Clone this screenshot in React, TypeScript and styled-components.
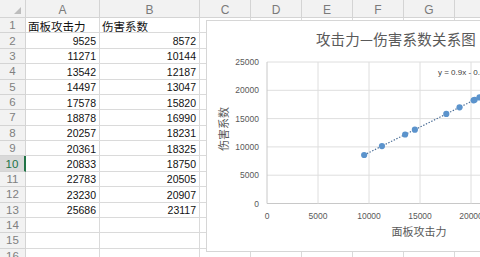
import React from "react";
import styled, { createGlobalStyle } from "styled-components";

const GlobalStyle = createGlobalStyle`
  html, body { margin: 0; padding: 0; background: #fff; overflow: hidden; }
  #root { width: 480px; height: 257px; overflow: hidden; }
`;

const columns = ["A", "B", "C", "D", "E", "F", "G"];
const data: [number, number][] = [
  [9525, 8572],
  [11271, 10144],
  [13542, 12187],
  [14497, 13047],
  [17578, 15820],
  [18878, 16990],
  [20257, 18231],
  [20361, 18325],
  [20833, 18750],
  [22783, 20505],
  [23230, 20907],
  [25686, 23117],
];

const Page = styled.div`
  position: relative;
  width: 480px;
  height: 257px;
  overflow: hidden;
`;

const Sheet = styled.div`
  display: grid;
  width: 540px;
  grid-template-columns: 26px 74px 100px repeat(5, 51px) 85px;
  grid-template-rows: 18px;
  grid-auto-rows: 15.385px;
  font-family: "Liberation Sans", "Noto Sans CJK SC", sans-serif;
`;

const Corner = styled.div`
  position: relative;
  background: #f2f2f2;
  border-right: 1px solid #d4d4d4;
  border-bottom: 1px solid #d4d4d4;
  box-sizing: border-box;
  &::after {
    content: "";
    position: absolute;
    right: 4px;
    bottom: 3px;
    width: 0;
    height: 0;
    border-left: 7px solid transparent;
    border-bottom: 7px solid #bdbdbd;
  }
`;

const ColHeader = styled.div`
  background: #f2f2f2;
  border-right: 1px solid #d4d4d4;
  border-bottom: 1px solid #d4d4d4;
  box-sizing: border-box;
  display: flex;
  align-items: center;
  justify-content: center;
  color: #7a7a7a;
  font-size: 12px;
  padding-top: 2px;
`;

const RowHeader = styled.div<{ $active?: boolean }>`
  background: ${(p) => (p.$active ? "#d9d9d9" : "#f2f2f2")};
  border-right: ${(p) => (p.$active ? "2px solid #217346" : "1px solid #d4d4d4")};
  border-bottom: 1px solid #d4d4d4;
  box-sizing: border-box;
  display: flex;
  align-items: center;
  justify-content: center;
  color: ${(p) => (p.$active ? "#217346" : "#808080")};
  font-size: 11.5px;
`;

const Cell = styled.div<{ $num?: boolean }>`
  border-right: 1px solid #dadada;
  border-bottom: 1px solid #dadada;
  box-sizing: border-box;
  display: flex;
  align-items: center;
  justify-content: ${(p) => (p.$num ? "flex-end" : "flex-start")};
  padding: ${(p) => (p.$num ? "1px 3px 0 0" : "1px 0 0 2px")};
  color: #111;
  font-size: ${(p) => (p.$num ? "10.5px" : "11.5px")};
  font-family: ${(p) =>
    p.$num ? `"Liberation Sans", sans-serif` : `"Noto Sans CJK SC", sans-serif`};
  white-space: nowrap;
  overflow: hidden;
`;

const Chart = styled.div`
  position: absolute;
  left: 206px;
  top: 20px;
  width: 380px;
  height: 232px;
  background: #fff;
  border: 1px solid #d6d6d6;
  box-sizing: border-box;
  display: flex;
  flex-direction: column;
`;

const ChartTitle = styled.div`
  height: 34px;
  flex: none;
  display: flex;
  align-items: center;
  justify-content: center;
  color: #595959;
  font-family: "Noto Sans CJK SC", sans-serif;
  font-size: 14.5px;
  letter-spacing: 0.2px;
`;

const Plot = styled.svg`
  display: block;
  flex: none;
  font-family: "Liberation Sans", "Noto Sans CJK SC", sans-serif;
`;

const X0 = 267;
const XS = 51 / 5000;
const Y0 = 203.5;
const YS = 28.3 / 5000;
const px = (v: number) => X0 + v * XS;
const py = (v: number) => Y0 - v * YS;

function ScatterPlot() {
  const yTicks = [0, 5000, 10000, 15000, 20000, 25000];
  const xTicks = [0, 5000, 10000, 15000, 20000];
  return (
    <Plot width={378} height={196} viewBox="0 0 378 196">
      <g transform="translate(-207 -55)">
        {yTicks.map((t) => (
          <line key={"h" + t} x1={X0} x2={600} y1={py(t)} y2={py(t)} stroke={t === 0 ? "#c8c8c8" : "#dedede"} strokeWidth={1} />
        ))}
        {xTicks.map((t) => (
          <line key={"v" + t} x1={px(t)} x2={px(t)} y1={py(25000)} y2={py(0)} stroke={t === 0 ? "#c8c8c8" : "#dedede"} strokeWidth={1} />
        ))}
        {yTicks.map((t) => (
          <text key={"yl" + t} x={259} y={py(t)} textAnchor="end" dominantBaseline="central" fontSize={8.5} fill="#595959">
            {t}
          </text>
        ))}
        {xTicks.map((t) => (
          <text key={"xl" + t} x={px(t)} y={216} textAnchor="middle" dominantBaseline="central" fontSize={8.5} fill="#595959">
            {t}
          </text>
        ))}
        <line x1={px(9525)} y1={py(9525 * 0.9)} x2={px(30000)} y2={py(30000 * 0.9)} stroke="#4a6d96" strokeWidth={1.2} strokeDasharray="1.4 1.6" />
        {data.map(([x, y]) => (
          <circle key={x} cx={px(x)} cy={py(y)} r={3.1} fill="#5b93cc" />
        ))}
        <text x={438} y={72} dominantBaseline="central" fontSize={8} fill="#404040">
          y = 0.9x - 0.0372
        </text>
        <text
          x={223}
          y={129}
          transform="rotate(-90 223 129)"
          textAnchor="middle"
          dominantBaseline="central"
          fontSize={11}
          fill="#595959"
          fontFamily={`"Noto Sans CJK SC", sans-serif`}
        >
          伤害系数
        </text>
        <text
          x={419}
          y={231}
          textAnchor="middle"
          dominantBaseline="central"
          fontSize={11}
          fill="#595959"
          fontFamily={`"Noto Sans CJK SC", sans-serif`}
        >
          面板攻击力
        </text>
      </g>
    </Plot>
  );
}

export default function App() {
  const rows = Array.from({ length: 16 }, (_, i) => i + 1);
  return (
    <Page>
      <GlobalStyle />
      <Sheet>
        <Corner />
        {columns.map((c) => (
          <ColHeader key={c}>{c}</ColHeader>
        ))}
        <ColHeader />
        {rows.map((r) => {
          const d = r >= 2 && r <= 13 ? data[r - 2] : null;
          return (
            <React.Fragment key={r}>
              <RowHeader $active={r === 10}>{r}</RowHeader>
              {r === 1 ? (
                <>
                  <Cell>面板攻击力</Cell>
                  <Cell>伤害系数</Cell>
                </>
              ) : (
                <>
                  <Cell $num>{d ? d[0] : ""}</Cell>
                  <Cell $num>{d ? d[1] : ""}</Cell>
                </>
              )}
              {columns.slice(2).map((c) => (
                <Cell key={c} />
              ))}
              <Cell />
            </React.Fragment>
          );
        })}
      </Sheet>
      <Chart>
        <ChartTitle>攻击力—伤害系数关系图</ChartTitle>
        <ScatterPlot />
      </Chart>
    </Page>
  );
}
